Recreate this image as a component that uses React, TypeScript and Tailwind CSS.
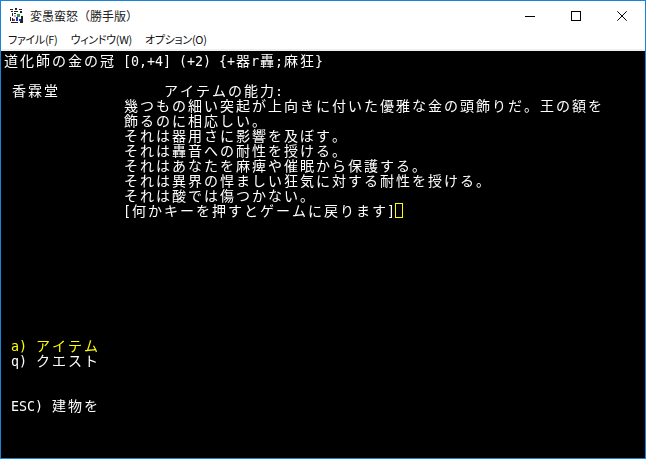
const isWide = (c: string) => c.charCodeAt(0) > 0x2e80;

function Cells({ text, color = "text-white" }: { text: string; color?: string }) {
  return (
    <>
      {Array.from(text).map((c, i) =>
        isWide(c) ? (
          <span key={i} className={`inline-block w-4 text-center whitespace-pre text-[14px] font-['Noto_Sans_CJK_JP',sans-serif] ${color}`}>
            {c}
          </span>
        ) : (
          <span key={i} className={`inline-block w-2 pt-px text-center whitespace-pre text-[13.33px] font-['DejaVu_Sans_Mono',monospace] ${color}`}>
            {c}
          </span>
        )
      )}
    </>
  );
}

function Row({ children }: { children?: React.ReactNode }) {
  return <div className="h-[15px] leading-[15px] whitespace-pre flex items-center">{children}</div>;
}

function AppIcon() {
  return (
    <svg width="16" height="16" viewBox="0 0 16 16" shapeRendering="crispEdges" className="shrink-0">
      <path d="M1 1h3v1H1zM6 0h2v2H6zM10 1h3v1h-3zM2 3h2v1H2zM5 3h4v1H5zM11 3h2v2h-2zM3 5h1v3H3zM5 5h2v1H5zM1 9h1v4H1zM3 10h1v3H3zM12 8h2v5h-2zM2 14h7v1H2zM11 13h3v2h-3z" fill="#222" />
      <path d="M8 6h3v3H8z" fill="#2a9a3c" />
      <path d="M7 9h2v4H7zM10 11h2v2h-2z" fill="#2030c8" />
      <path d="M4 11h2v2H4z" fill="#c03040" />
      <path d="M5 7h2v2H5z" fill="#b8b8b8" />
    </svg>
  );
}

function WindowControls() {
  return (
    <div className="flex h-full">
      <div className="w-[46px] h-full flex items-center justify-center">
        <svg width="10" height="10" viewBox="0 0 10 10" shapeRendering="crispEdges"><path d="M0 5h10v1H0z" fill="#000" /></svg>
      </div>
      <div className="w-[46px] h-full flex items-center justify-center">
        <svg width="10" height="10" viewBox="0 0 10 10" shapeRendering="crispEdges"><path d="M.5.5h9v9h-9z" fill="none" stroke="#000" /></svg>
      </div>
      <div className="w-[46px] h-full flex items-center justify-center">
        <svg width="10" height="10" viewBox="0 0 10 10"><path d="M.3.3l9.4 9.4M9.7.3L.3 9.7" fill="none" stroke="#000" strokeWidth="1" /></svg>
      </div>
    </div>
  );
}

const body = [
  "幾つもの細い突起が上向きに付いた優雅な金の頭飾りだ。王の額を",
  "飾るのに相応しい。",
  "それは器用さに影響を及ぼす。",
  "それは轟音への耐性を授ける。",
  "それはあなたを麻痺や催眠から保護する。",
  "それは異界の悍ましい狂気に対する耐性を授ける。",
  "それは酸では傷つかない。",
];

export default function App() {
  return (
    <div className="w-[646px] h-[459px] border border-[#1883d7] bg-white flex flex-col overflow-hidden">
      <div className="h-[29px] shrink-0 flex items-center justify-between bg-white">
        <div className="flex items-center pl-2 gap-[5px]">
          <AppIcon />
          <span className="text-[12px] text-[#222] font-['Noto_Sans_CJK_JP',sans-serif]">変愚蛮怒（勝手版）</span>
        </div>
        <WindowControls />
      </div>
      <div className="h-[19px] shrink-0 flex items-center gap-[13px] pl-[7px] text-[11px] tracking-[-0.3px] text-[#111] font-['Noto_Sans_CJK_JP',sans-serif] [font-feature-settings:'palt']">
        <span>ファイル(F)</span>
        <span>ウィンドウ(W)</span>
        <span>オプション(O)</span>
      </div>
      <div className="h-[2px] shrink-0 bg-[#f0f0f0]" />
      <div className="flex-1 bg-black pt-[2px] pl-[2px]">
        <div className="will-change-transform">
          <Row><Cells text="道化師の金の冠 [0,+4] (+2) {+器r轟;麻狂}" /></Row>
          <Row />
          <Row><Cells text=" 香霖堂             アイテムの能力:" /></Row>
          <div className="pl-[120px]">
            {body.map((t) => (
              <Row key={t}><Cells text={t} /></Row>
            ))}
            <Row>
              <Cells text="[何かキーを押すとゲームに戻ります]" />
              <span className="inline-block w-2 h-[15px] border border-[#ffff00]" />
            </Row>
          </div>
          <div className="h-[120px]" />
          <Row><Cells text=" a) アイテム" color="text-[#ffff00]" /></Row>
          <Row><Cells text=" q) クエスト" /></Row>
          <Row />
          <Row />
          <Row><Cells text=" ESC) 建物を" /></Row>
        </div>
      </div>
    </div>
  );
}
